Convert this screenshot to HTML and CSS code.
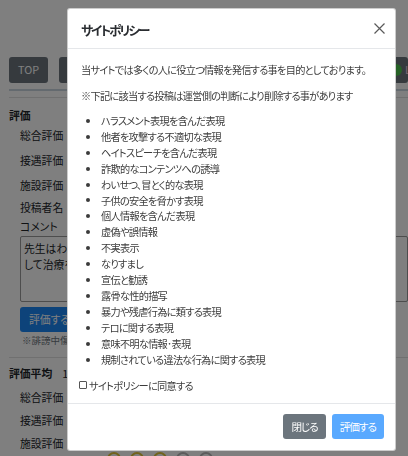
FILE: index.html
```html
<!DOCTYPE html>
<html lang="ja">
<head>
<meta charset="utf-8">
<title>サイトポリシー</title>
<link rel="stylesheet" href="styles.css">
</head>
<body>
<div class="page">
  <nav class="nav">
    <div class="nav-left">
      <span class="btn btn-secondary">TOP</span>
      <span class="btn btn-secondary">口コミ一覧</span>
    </div>
    <span class="btn btn-share"><span class="line-icon"></span><span class="share-text">LINEで送る</span></span>
  </nav>
  <hr class="rule">
  <section class="review-form">
    <h3 class="sec-title">評価</h3>
    <div class="field"><span class="label">総合評価</span></div>
    <div class="field"><span class="label">接遇評価</span></div>
    <div class="field"><span class="label">施設評価</span></div>
    <div class="field field-short"><span class="label">投稿者名</span></div>
    <div class="label comment-label">コメント</div>
    <div class="textarea">先生はわかりやすく丁寧に説明<br>して治療を進めてくださいました。</div>
    <span class="btn btn-primary submit">評価する</span>
    <p class="note">※誹謗中傷にあたる投稿は削除されます</p>
  </section>
  <hr class="rule rule-mid">
  <section class="review-avg">
    <h3 class="sec-title avg-title">評価平均<span class="avg-num">1.0</span></h3>
    <div class="field field-avg"><span class="label">総合評価</span></div>
    <div class="field field-avg"><span class="label">接遇評価</span></div>
    <div class="field field-avg"><span class="label">施設評価</span></div>
    <div class="stars">
      <span class="star on"></span><span class="star on"></span><span class="star on"></span><span class="star"></span><span class="star"></span>
    </div>
  </section>
</div>

<div class="backdrop"></div>

<div class="modal" role="dialog">
  <div class="modal-header">
    <h5 class="modal-title">サイトポリシー</h5>
    <span class="close" aria-label="閉じる">
      <svg width="11" height="11" viewBox="0 0 11 11"><path d="M0.5 0.5 L10.5 10.5 M10.5 0.5 L0.5 10.5" stroke="#5a5a5a" stroke-width="1.2" fill="none"/></svg>
    </span>
  </div>
  <div class="modal-body">
    <p>当サイトでは多くの人に役立つ情報を発信する事を目的としております。</p>
    <p>※下記に該当する投稿は運営側の判断により削除する事があります</p>
    <ul class="policy-list">
      <li>ハラスメント表現を含んだ表現</li>
      <li>他者を攻撃する不適切な表現</li>
      <li>ヘイトスピーチを含んだ表現</li>
      <li>詐欺的なコンテンツへの誘導</li>
      <li>わいせつ、冒とく的な表現</li>
      <li>子供の安全を脅かす表現</li>
      <li>個人情報を含んだ表現</li>
      <li>虚偽や誤情報</li>
      <li>不実表示</li>
      <li>なりすまし</li>
      <li>宣伝と勧誘</li>
      <li>露骨な性的描写</li>
      <li>暴力や残虐行為に類する表現</li>
      <li>テロに関する表現</li>
      <li>意味不明な情報･表現</li>
      <li>規制されている違法な行為に関する表現</li>
    </ul>
    <label class="agree"><input type="checkbox" class="check">サイトポリシーに同意する</label>
  </div>
  <div class="modal-footer">
    <span class="btn btn-secondary">閉じる</span>
    <span class="btn btn-primary disabled">評価する</span>
  </div>
</div>
</body>
</html>
```

FILE: styles.css
```css
* { box-sizing: border-box; }

html, body {
  margin: 0;
  padding: 0;
  background: #ffffff;
  overflow: hidden;
}

body {
  width: 408px;
  height: 456px;
  font-family: "Noto Sans CJK JP", "Noto Sans", sans-serif;
  font-size: 10.8px;
  line-height: 15.9px;
  color: #212529;
  font-feature-settings: "palt";
}

/* ---------- background page ---------- */
.page {
  padding: 57px 0 0 9px;
}

.nav {
  display: flex;
  justify-content: space-between;
  align-items: center;
  padding-bottom: 6px;
  border-bottom: 2px solid #c9d4df;
}

.nav-left {
  display: flex;
  gap: 11px;
}

.btn {
  display: inline-flex;
  align-items: center;
  justify-content: center;
  height: 26px;
  padding: 0 9px;
  border-radius: 3px;
  color: #ffffff;
  white-space: nowrap;
  font-size: 10.8px;
}

.btn-secondary { background: #6c757d; }
.btn-primary { background: #1a86f5; }

.btn-share {
  width: 26px;
  justify-content: flex-start;
  padding: 0 0 0 8px;
  gap: 3px;
  overflow: hidden;
  background: #6c757d;
}

.line-icon {
  flex: none;
  width: 12px;
  height: 12px;
  border-radius: 50%;
  background: #4cc24c;
}

.share-text { color: #f3d0e0; }

.rule {
  margin: 6px 0 0;
  border: 0;
  border-top: 1px solid #e0e0e0;
}

.sec-title {
  margin: 9px 0 0;
  font-size: 10.8px;
  font-weight: 700;
  line-height: 16px;
}

.field {
  display: flex;
  align-items: center;
  height: 25px;
}

.field-short { height: 20px; }

.label {
  padding-left: 11px;
  color: #212529;
}

.comment-label { line-height: 16px; }

.textarea {
  margin: 2px 0 0 11px;
  height: 66px;
  padding: 3px 3px;
  border: 1px solid #9a9a9a;
  border-radius: 2px;
  white-space: nowrap;
  line-height: 16px;
}

.submit {
  margin: 5px 0 0 11px;
  height: 25px;
  padding: 0 9px;
  width: 80px;
  justify-content: flex-start;
}

.note {
  margin: 0;
  padding-left: 13px;
  font-size: 9.5px;
  line-height: 16px;
  color: #6c757d;
}

.rule-mid { margin-top: 9px; }

.avg-title {
  margin-top: 7px;
  margin-bottom: 5px;
}

.avg-num {
  margin-left: 10px;
  font-weight: 400;
}

.field-avg { height: 23px; }

.stars {
  display: flex;
  gap: 9px;
  padding-left: 98px;
  margin-top: -3px;
}

.star {
  width: 14px;
  height: 14px;
  border-radius: 50%;
  border: 2px solid #b8b8b8;
}

.star.on { border-color: #e2c63a; }

/* ---------- overlay ---------- */
.backdrop {
  position: fixed;
  inset: 0;
  background: rgba(0, 0, 0, 0.5);
}

.modal {
  position: fixed;
  top: 8px;
  left: 67px;
  width: 329px;
  background: #ffffff;
  border: 1px solid rgba(0, 0, 0, 0.2);
  border-radius: 3px;
  color: #3c3c3c;
}

.modal-header {
  display: flex;
  align-items: center;
  justify-content: space-between;
  height: 40px;
  padding: 2px 10px 0 13px;
  border-bottom: 1px solid #e5e7ea;
}

.modal-title {
  margin: 0;
  font-size: 12.6px;
  font-weight: 700;
  line-height: 18px;
  letter-spacing: -1.9px;
  color: #2a2d31;
}

.close {
  display: flex;
  width: 11px;
  height: 11px;
  margin-top: -2px;
}

.modal-body {
  padding: 13px 13px 10px;
  font-size: 10.2px;
  letter-spacing: -0.72px;
  white-space: nowrap;
}

.modal-body p {
  margin: 0 0 9.6px;
}

.policy-list {
  margin: 0 0 10px;
  padding: 0;
  list-style: none;
}

.policy-list li {
  display: flex;
  align-items: center;
  padding-left: 5px;
}

.policy-list li::before {
  content: "";
  flex: none;
  width: 4px;
  height: 4px;
  margin-right: 11px;
  border-radius: 50%;
  background: #3c3c3c;
}

.agree {
  display: flex;
  align-items: center;
  margin-left: -2px;
}

.check {
  appearance: none;
  -webkit-appearance: none;
  flex: none;
  width: 8px;
  height: 8px;
  margin: 0 2px 0 0;
  border: 1px solid #555555;
  border-radius: 1px;
  background: #ffffff;
}

.modal-footer {
  display: flex;
  justify-content: flex-end;
  gap: 6px;
  padding: 10px 11px 11px;
  border-top: 1px solid #e5e7ea;
}

.modal-footer .btn {
  height: 25px;
  padding: 0 8px;
  font-size: 10.6px;
  letter-spacing: -1px;
}

.btn-primary.disabled {
  background: #007bff;
  opacity: 0.65;
}
```
